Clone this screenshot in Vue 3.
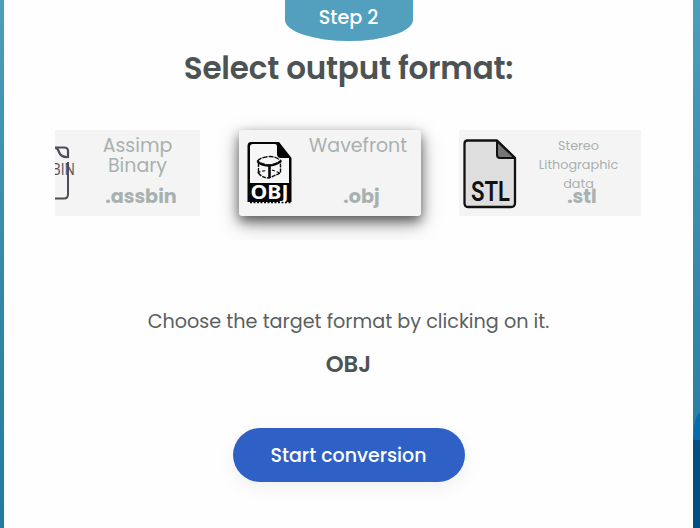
<template>
  <div class="converter-page">
    <div class="converter-panel">
      <div class="step-badge">Step 2</div>
      <h2 class="panel-title">Select output format:</h2>

      <div class="format-carousel">
        <div class="format-track">
          <div
            v-for="format in formats"
            :key="format.id"
            class="format-card"
            :class="{ selected: format.id === selectedId }"
            @click="selectFormat(format)"
          >
            <div class="format-icon">
              <svg v-if="format.id === 'assbin'" width="62" height="86" viewBox="0 0 62 86" fill="none">
                <path d="M8 17.500H46Q50 17.500 50 21V27Q43 27.500 41 22Q40 18 36 17.500" stroke="#4b4e57" stroke-width="2.200"/>
                <path d="M50 32V64Q50 68.500 46 68.500H12Q8 68.500 8 64V17.500" stroke="#4b4e57" stroke-width="2"/>
                <text x="10" y="45" class="assbin-label" textLength="47" lengthAdjust="spacingAndGlyphs">ASSBIN</text>
              </svg>
              <svg v-else-if="format.id === 'obj'" width="62" height="86" viewBox="0 0 62 86" fill="none">
                <path d="M8.500 72V16Q8.500 12 12 12H40L52.500 28V72Z" fill="#050505"/>
                <path d="M11 53V17Q11 14 14 14H36Q38 14 38 17V24Q38 28 42 28H50V53Z" fill="#f7f7f7"/>
                <path d="M18.500 31Q21 28 27 27Q36 25 42 31Q37 34 30 35Q22 34 18.500 31Z" stroke="#080808" stroke-width="1.300" stroke-dasharray="5 1"/>
                <path d="M18.500 31.500Q23 36 30 35.500Q37 35.500 42 31" stroke="#080808" stroke-width="2.200"/>
                <path d="M30.500 35V48" stroke="#080808" stroke-width="2.600"/>
                <path d="M19.500 33V43Q23 48 30 48L41.500 43V32" stroke="#080808" stroke-width="1.400" stroke-dasharray="4 1"/>
                <path d="M18.500 43Q24 40 28 41M33 40L41 43" stroke="#080808" stroke-width="1.200" stroke-dasharray="3 2"/>
                <text x="11.500" y="69" class="obj-label" textLength="38" lengthAdjust="spacingAndGlyphs">OBJ</text>
                <path d="M11 72.500H52" stroke="#050505" stroke-width="1.500" stroke-dasharray="2 1.500"/>
              </svg>
              <svg v-else width="62" height="86" viewBox="0 0 62 86" fill="none">
                <path d="M8.500 10.500H38L56 28V73Q56 77 52 77H9Q5.500 77 5.500 73V14Q5.500 10.500 8.500 10.500Z" fill="#dedede" stroke="#111" stroke-width="2.300" stroke-linejoin="round"/>
                <path d="M38 11L56 28H41Q38 28 38 25Z" fill="#767676" stroke="#111" stroke-width="2" stroke-linejoin="round"/>
                <text x="12" y="70.500" class="stl-label" textLength="39" lengthAdjust="spacingAndGlyphs">STL</text>
              </svg>
            </div>
            <div class="format-info">
              <div class="format-name" :class="{ small: format.small }">
                <span v-for="line in format.lines" :key="line">{{ line }}</span>
              </div>
              <div class="format-extension">.{{ format.id }}</div>
            </div>
          </div>
        </div>
      </div>

      <p class="panel-hint">Choose the target format by clicking on it.</p>
      <div class="selected-format">{{ selectedId.toUpperCase() }}</div>
      <button class="start-button" type="button">Start conversion</button>
    </div>
  </div>
</template>

<script setup>
import { ref } from 'vue';

const formats = [
  { id: 'assbin', lines: ['Assimp', 'Binary'] },
  { id: 'obj', lines: ['Wavefront'] },
  { id: 'stl', lines: ['Stereo', 'Lithographic', 'data'], small: true }
];

const selectedId = ref('obj');

const selectFormat = (format) => {
  selectedId.value = format.id;
};
</script>

<style>
body {
  margin: 0;
  overflow: hidden;
}
</style>

<style scoped>
.converter-page {
  box-sizing: border-box;
  height: 528px;
  padding: 0 7px 0 4px;
  background:
    linear-gradient(#005084, #005084) no-repeat right 440px / 7px 88px,
    radial-gradient(ellipse 7px 28px at 7px 28px, #076ba9 92%, transparent) no-repeat right 412px / 7px 28px,
    linear-gradient(#4c9eb9, #3589aa 50%, #207c9d);
  font-family: Poppins, Inter, "Liberation Sans", sans-serif;
}

.converter-panel {
  display: flex;
  flex-direction: column;
  align-items: center;
  height: 528px;
  background: #fefefe;
  color: #4d5353;
}

.step-badge {
  width: 128px;
  height: 41px;
  border-radius: 0 0 50% 50% / 0 0 21px 21px;
  background: #539fbe;
  color: #fff;
  font-size: 19.2px;
  font-weight: 500;
  line-height: 35px;
  text-align: center;
}

.panel-title {
  margin: 6px 0 0;
  font-size: 31px;
  font-weight: 600;
  line-height: 42px;
  letter-spacing: -0.2px;
  white-space: nowrap;
}

.format-carousel {
  display: flex;
  justify-content: flex-end;
  box-sizing: border-box;
  width: 586px;
  height: 135px;
  margin: 16px 1px 0 0;
  padding: 25px 0 24px;
  overflow: hidden;
}

.format-track {
  display: flex;
  flex-shrink: 0;
  gap: 38.5px;
}

.format-card {
  display: flex;
  width: 182px;
  height: 86px;
  background: #f4f4f4;
  cursor: pointer;
}

.format-card.selected {
  border-radius: 3px;
  box-shadow: 0 5px 12px rgba(0, 0, 0, 0.55), 0 8px 22px rgba(0, 0, 0, 0.28);
}

.format-icon {
  width: 62px;
}

.format-icon svg {
  display: block;
}

.format-info {
  display: flex;
  flex: 1;
  flex-direction: column;
  color: #a8b1b0;
  text-align: center;
}

.format-name {
  display: flex;
  flex-direction: column;
  flex-shrink: 0;
  box-sizing: border-box;
  height: 55px;
  padding: 6px 5px 0 0;
  font-size: 19px;
  line-height: 19.5px;
}

.format-name.small {
  font-size: 12.8px;
  line-height: 19px;
}

.format-extension {
  height: 31px;
  padding-left: 2px;
  font-size: 19.2px;
  font-weight: 700;
  line-height: 23px;
}

.assbin-label {
  font: 16px "Open Sans", sans-serif;
  fill: #4b4e57;
}

.obj-label {
  font: 700 19.5px "Noto Sans", sans-serif;
  fill: #fff;
}

.stl-label {
  font: 600 28px Roboto, sans-serif;
  fill: #111;
}

.panel-hint {
  margin: 69px 0 0;
  color: #5a6060;
  font-size: 19.2px;
  line-height: 26px;
  white-space: nowrap;
}

.selected-format {
  margin-top: 15px;
  font-size: 22.8px;
  font-weight: 600;
  line-height: 29px;
}

.start-button {
  width: 232px;
  height: 54px;
  margin-top: 49px;
  border: none;
  border-radius: 27px;
  background: #2e60c5;
  box-shadow: 0 6px 18px rgba(0, 0, 0, 0.06);
  color: #fff;
  font-family: inherit;
  font-size: 19px;
  font-weight: 500;
  cursor: pointer;
}
</style>
